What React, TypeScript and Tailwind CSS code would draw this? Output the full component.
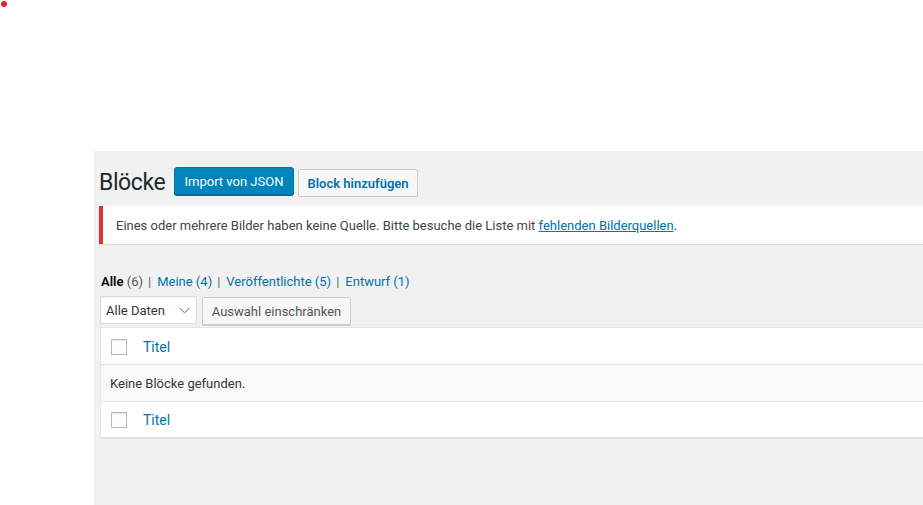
const Checkbox = () => (
  <span className="block w-[16px] h-[16px] border border-[#b4b9be] bg-white shadow-[inset_0_1px_2px_rgba(0,0,0,0.1)]" />
);

const filters = [
  { label: "Alle", count: 6, current: true },
  { label: "Meine", count: 4 },
  { label: "Veröffentlichte", count: 5 },
  { label: "Entwurf", count: 1 },
];

export default function App() {
  return (
    <div className="relative w-[923px] h-[505px] overflow-hidden bg-white font-['Roboto',sans-serif] text-[13px] text-[#444]">
      <span className="absolute left-[1px] top-[1px] w-[6px] h-[6px] rounded-full bg-[#e3262b]" />

      <div className="ml-[94px] mt-[151px] w-[1000px] h-[354px] bg-[#f1f1f1] pl-[5px]">
        {/* header */}
        <header className="flex items-start h-[55px]">
          <h1 className="w-[75px] mt-[17px] text-[23px] leading-[29px] tracking-[-0.4px] text-[#23282d]">Blöcke</h1>
          <button className="mt-[16px] w-[120px] h-[28px] pt-[1px] rounded-[3px] border border-[#0073aa] bg-[#0085ba] text-white text-[13px] shadow-[0_1px_0_#006799]">
            Import von JSON
          </button>
          <button className="ml-[4px] mt-[18px] w-[120px] h-[28px] pt-[1px] rounded-[2px] border border-[#ccc] bg-[#f7f7f7] text-[#0073aa] text-[13px] font-semibold">
            Block hinzufügen
          </button>
        </header>

        {/* notice */}
        <div className="flex items-center h-[38px] w-[900px] border-l-4 border-[#dc3232] bg-white pl-[13px] pt-[2px] shadow-[0_1px_1px_rgba(0,0,0,0.08)]">
          <p>
            Eines oder mehrere Bilder haben keine Quelle. Bitte besuche die Liste mit{" "}
            <a href="#" className="text-[#0073aa] underline">fehlenden Bilderquellen</a>.
          </p>
        </div>

        {/* views */}
        <ul className="flex ml-[2px] mt-[25px] h-[26px] leading-[26px] text-[#666]">
          {filters.map((f, i) => (
            <li key={f.label} className="whitespace-pre">
              {f.current ? (
                <span>
                  <span className="font-semibold text-black">{f.label}</span>{" "}
                  <span className="text-[#555]">({f.count})</span>
                </span>
              ) : (
                <a href="#" className="text-[#0073aa]">{f.label} ({f.count})</a>
              )}
              {i < filters.length - 1 && <span className="inline-block ml-[5px] mr-[6px] text-[#666]">|</span>}
            </li>
          ))}
        </ul>

        {/* filter bar */}
        <div className="flex items-start mt-[1px] ml-[1px] h-[29px]">
          <div className="flex items-center justify-between w-[97px] h-[28px] border border-[#ddd] bg-white pl-[5px] pr-[6px] text-[#32373c] shadow-[inset_0_1px_2px_rgba(0,0,0,0.07)]">
            <span className="pt-[1px]">Alle Daten</span>
            <svg width="11" height="7" viewBox="0 0 11 7" fill="none" stroke="#666" strokeWidth="1">
              <polyline points="0.5,0.8 5.5,5.8 10.5,0.8" />
            </svg>
          </div>
          <button className="ml-[5px] mt-[1px] w-[149px] h-[28px] pt-[1px] rounded-[2px] border border-[#ccc] bg-[#f7f7f7] text-[#555] text-[13px] shadow-[0_1px_0_#ccc]">
            Auswahl einschränken
          </button>
        </div>

        {/* table */}
        <div className="mt-[2px] ml-[1px] w-[900px] border border-[#e5e5e5] bg-white shadow-[0_1px_1px_rgba(0,0,0,0.04)]">
          <div className="flex items-center h-[37px] pt-[1px] pl-[10px] border-b border-[#e1e1e1]">
            <Checkbox />
            <a href="#" className="ml-[16px] mt-[2px] text-[14px] text-[#0073aa]">Titel</a>
          </div>
          <div className="flex items-center h-[37px] pl-[9px] pt-[2px] bg-[#f9f9f9] border-b border-[#e1e1e1] text-[#32373c]">
            Keine Blöcke gefunden.
          </div>
          <div className="flex items-center h-[35px] pl-[10px]">
            <Checkbox />
            <a href="#" className="ml-[16px] mt-[2px] text-[14px] text-[#0073aa]">Titel</a>
          </div>
        </div>
      </div>
    </div>
  );
}
